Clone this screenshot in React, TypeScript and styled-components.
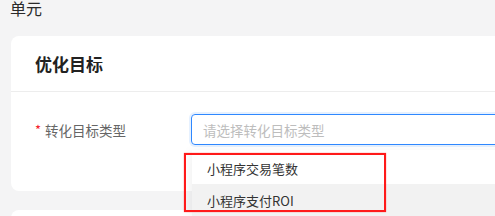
import React from 'react';
import styled, { createGlobalStyle } from 'styled-components';

const GlobalStyle = createGlobalStyle`
  html, body {
    margin: 0;
    padding: 0;
    background: #f4f4f5;
    font-family: 'Noto Sans CJK SC', 'Noto Sans', sans-serif;
    overflow: hidden;
  }
`;

const Page = styled.div`
  width: 495px;
  height: 216px;
  overflow: hidden;
  padding-left: 11px;
  box-sizing: border-box;
`;

const PageTitle = styled.div`
  margin: -2px 0 0 -1px;
  font-size: 16px;
  line-height: 21px;
  color: #2a2a2a;
`;

const Card = styled.div`
  width: 600px;
  background: #fff;
  border-radius: 8px;
`;

const FirstCard = styled(Card)`
  margin-top: 17px;
`;

const NextCard = styled(Card)`
  margin-top: 19px;
  height: 80px;
`;

const CardHeader = styled.div`
  height: 55px;
  display: flex;
  align-items: center;
  padding-left: 24px;
  border-bottom: 1px solid #ededed;
  font-size: 17px;
  font-weight: 700;
  color: #222;
`;

const CardBody = styled.div`
  padding: 22px 0 46px 24px;
`;

const FormRow = styled.div`
  display: flex;
  align-items: center;
`;

const Label = styled.div`
  width: 156px;
  font-size: 13.5px;
  color: #666;
  display: flex;
  align-items: center;
`;

const Required = styled.span`
  color: #f5222d;
  margin-right: 4px;
  font-size: 13px;
`;

const SelectWrap = styled.div`
  position: relative;
  width: 340px;
`;

const SelectBox = styled.div`
  height: 31px;
  box-sizing: border-box;
  border: 1px solid #2f88ff;
  border-radius: 4px;
  box-shadow: 0 0 0 2px rgba(47, 136, 255, 0.12);
  display: flex;
  align-items: center;
  padding-left: 11px;
  font-size: 13.5px;
  color: #bdbdbd;
`;

const Dropdown = styled.div`
  position: absolute;
  top: 36px;
  left: 1px;
  right: 0;
  background: #fff;
  padding-top: 2px;
  box-shadow: 0 3px 12px rgba(0, 0, 0, 0.08);
  z-index: 10;
`;

const Option = styled.div<{ $active?: boolean }>`
  height: 32px;
  display: flex;
  align-items: center;
  padding-left: 15px;
  font-size: 13px;
  color: #333;
  background: ${({ $active }) => ($active ? '#f2f2f2' : '#fff')};
`;

const Highlight = styled.div`
  position: absolute;
  left: -8px;
  top: 3px;
  width: 198px;
  height: 55px;
  border: 2px solid #ff1a1a;
  box-shadow: 0 0 1px rgba(255, 0, 0, 0.6);
  pointer-events: none;
`;

export default function App() {
  return (
    <>
      <GlobalStyle />
      <Page>
        <PageTitle>单元</PageTitle>
        <FirstCard>
          <CardHeader>优化目标</CardHeader>
          <CardBody>
            <FormRow>
              <Label>
                <Required>*</Required>转化目标类型
              </Label>
              <SelectWrap>
                <SelectBox>请选择转化目标类型</SelectBox>
                <Dropdown>
                  <Option>小程序交易笔数</Option>
                  <Option $active>小程序支付ROI</Option>
                  <Highlight />
                </Dropdown>
              </SelectWrap>
            </FormRow>
          </CardBody>
        </FirstCard>
        <NextCard />
      </Page>
    </>
  );
}
